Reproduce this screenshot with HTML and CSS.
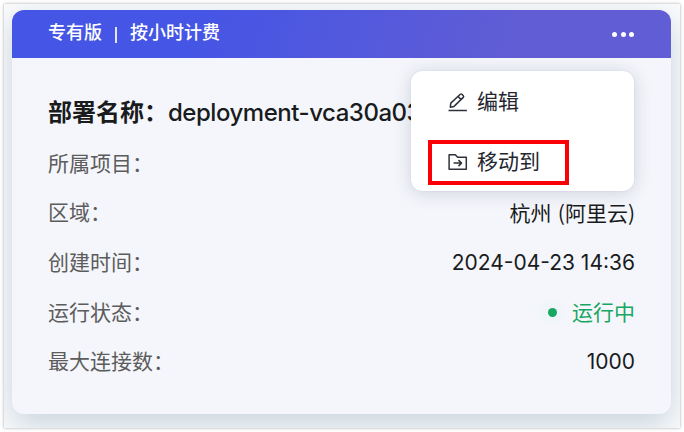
FILE: index.html
```html
<!DOCTYPE html>
<html lang="zh-CN">
<head>
<meta charset="utf-8">
<title>部署</title>
<link rel="stylesheet" href="styles.css">
</head>
<body>
<div class="frame">
  <section class="card">
    <header class="card-header">
      <div class="plan"><span>专有版</span><span class="divider"></span><span>按小时计费</span></div>
      <div class="more"><i></i><i></i><i></i></div>
    </header>
    <div class="card-body">
      <h1 class="title"><span class="title-label">部署名称：</span><span class="title-name">deployment-vca30a03</span></h1>
      <dl class="rows">
        <div class="row"><dt>所属项目：</dt><dd></dd></div>
        <div class="row"><dt>区域：</dt><dd class="cjk">杭州 (阿里云)</dd></div>
        <div class="row"><dt>创建时间：</dt><dd>2024-04-23 14:36</dd></div>
        <div class="row"><dt>运行状态：</dt><dd class="status cjk"><span class="halo"><i></i></span>运行中</dd></div>
        <div class="row"><dt>最大连接数：</dt><dd>1000</dd></div>
      </dl>
    </div>
    <div class="menu">
      <div class="menu-item">
        <svg class="icon" viewBox="0 0 20 20"><path d="M.5 18.5h18.4M2.3 15.2l.5-4.1L12.3 2.3q.8-.7 1.6 0l1.4 1.5q.7.8 0 1.6L6 14.4l-3.7.8zM10.2 4.6l3.1 3.1"/></svg>
        <span>编辑</span>
      </div>
      <div class="menu-item highlighted">
        <svg class="icon" viewBox="0 0 20 20"><path d="M1.1 2.7h6.2l2.4 2.5h8.6v12H1.1zM5.6 11.1h7.8M10.5 8.1l3 3-3 3"/></svg>
        <span>移动到</span>
      </div>
    </div>
  </section>
</div>
</body>
</html>
```
FILE: styles.css
```css
* { box-sizing: border-box; }

body {
  margin: 0;
  padding: 4px;
  width: 684px;
  height: 432px;
  overflow: hidden;
  background: #fff;
  font-family: Inter, "Noto Sans CJK SC", sans-serif;
}

.frame {
  width: 676px;
  height: 424px;
  padding: 6px 9px 10px 8px;
  overflow: hidden;
  background: #fafbfc;
  box-shadow: 0 0 1px rgba(0, 0, 0, .3), 0 0 4px rgba(0, 0, 0, .22);
}

.card {
  position: relative;
  height: 404px;
  border-radius: 12px;
  background: #f4f6fb;
  box-shadow: 0 10px 30px rgba(80, 120, 150, .3);
}

.card-header {
  display: flex;
  align-items: center;
  justify-content: space-between;
  height: 48px;
  padding: 0 37px 0 36px;
  border-radius: 12px 12px 0 0;
  background: linear-gradient(107deg, #4555e5 28%, #605dd5 75%);
  color: #fff;
}

.plan {
  display: flex;
  align-items: center;
  font-size: 18px;
  font-weight: 500;
  line-height: 26px;
  padding-bottom: 2px;
}

.divider {
  width: 2px;
  height: 16px;
  margin: 3px 13px 0 13px;
  background: rgba(255, 255, 255, .85);
}

.more { display: flex; gap: 3.5px; }
.more i { width: 5px; height: 5px; border-radius: 50%; background: #fff; }

.card-body { padding: 37px 36px 0; }

.title {
  display: flex;
  margin: 0;
  color: #191b1c;
  font-size: 24px;
  line-height: 36px;
  white-space: nowrap;
}
.title-label { font-weight: 600; }
.title-name { font-weight: 500; letter-spacing: -.47px; }

.rows { margin: 8px 0 0; }

.row {
  display: flex;
  align-items: center;
  justify-content: space-between;
  height: 49.6px;
  font-size: 21px;
  line-height: 32px;
}

.row dt { color: #5c5c5c; }
.row dd { margin: 0; color: #191b1c; }

.row .cjk {
  margin-top: -2px;
  font-family: "Noto Sans CJK SC", sans-serif;
  word-spacing: 1.5px;
}

.row .status {
  display: flex;
  align-items: center;
  margin-top: -4px;
  color: #18a763;
}

.halo {
  display: flex;
  align-items: center;
  justify-content: center;
  width: 24px;
  height: 24px;
  margin: 4px 8px 0 0;
  border-radius: 50%;
  background: #f0f5f9;
}
.halo i { width: 9px; height: 9px; border-radius: 50%; background: #18a763; }

.menu {
  position: absolute;
  top: 61px;
  left: 399px;
  display: flex;
  flex-direction: column;
  gap: 15px;
  width: 223px;
  height: 120px;
  padding: 9px 17px;
  border-radius: 11px;
  background: #fff;
  box-shadow: 0 0 1px rgba(30, 40, 90, .2), 0 2px 18px rgba(30, 35, 70, .17);
}

.menu-item {
  display: flex;
  flex: none;
  align-items: center;
  gap: 9px;
  width: 141px;
  height: 45px;
  padding: 0 0 1px 20px;
  color: #24262f;
  font-size: 21px;
  line-height: 32px;
}

.highlighted { outline: 4px solid #fa0007; outline-offset: -4px; }

.icon {
  width: 20px;
  height: 20px;
  fill: none;
  stroke: #30323b;
  stroke-width: 1.5;
  stroke-linejoin: round;
}
```
